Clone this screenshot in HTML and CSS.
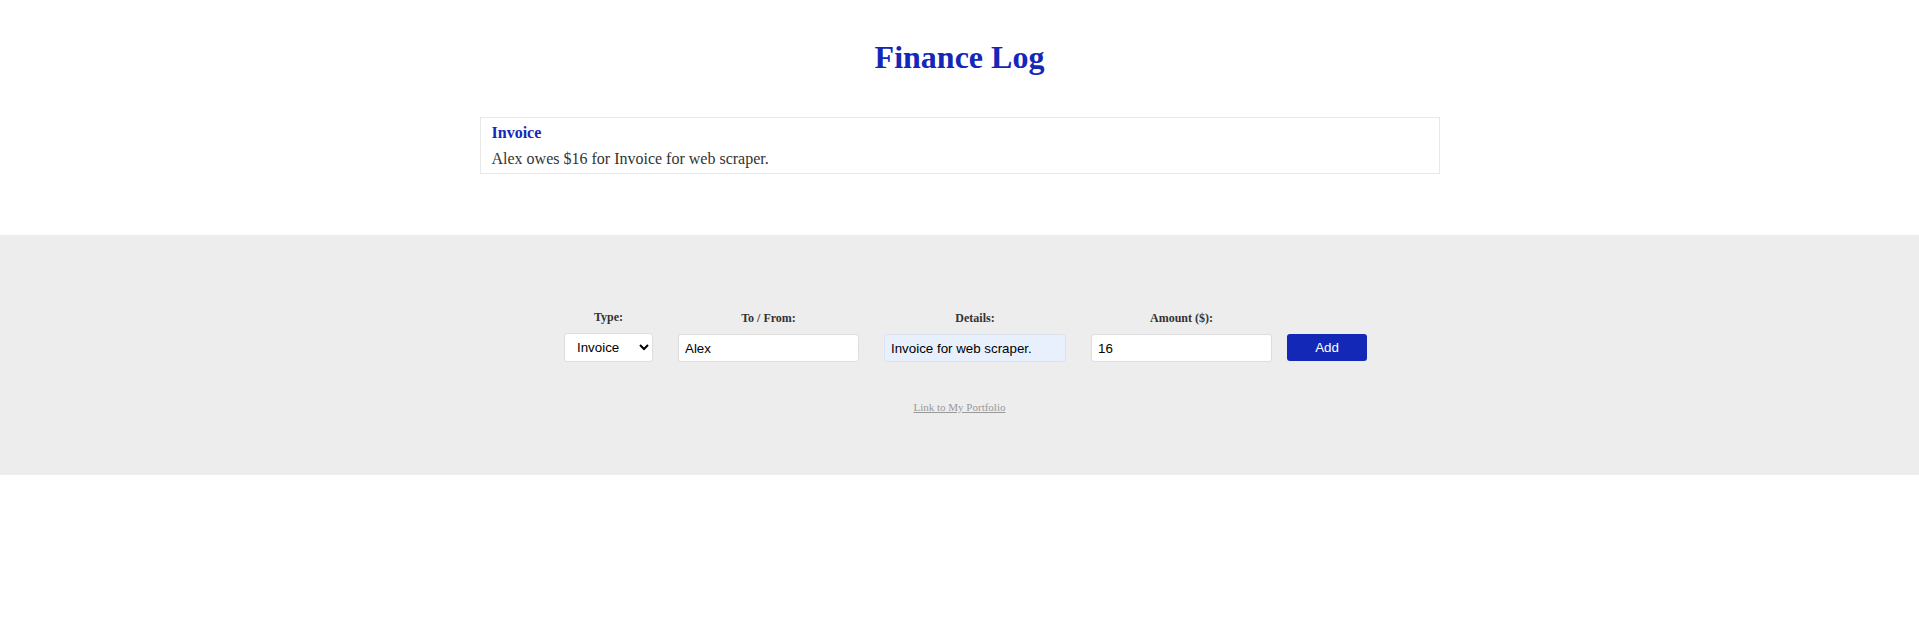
FILE: index.html
```html
<!DOCTYPE html>
<html>
<head>
<meta charset="utf-8">
<title>Finance Log</title>
<link rel="stylesheet" href="styles.css">
</head>
<body>
<header class="top">
  <h1 class="title">Finance Log</h1>
  <div class="card">
    <h3 class="card-title">Invoice</h3>
    <p class="card-text">Alex owes $16 for Invoice for web scraper.</p>
  </div>
</header>
<footer class="panel">
  <form class="row">
    <div class="field">
      <label class="label">Type:</label>
      <select class="select"><option>Invoice</option><option>Payment</option></select>
    </div>
    <div class="field">
      <label class="label">To / From:</label>
      <input class="input" type="text" value="Alex">
    </div>
    <div class="field">
      <label class="label">Details:</label>
      <input class="input autofill" type="text" value="Invoice for web scraper.">
    </div>
    <div class="field">
      <label class="label">Amount ($):</label>
      <input class="input" type="text" value="16">
    </div>
    <button class="btn" type="button">Add</button>
  </form>
  <a class="link" href="#">Link to My Portfolio</a>
</footer>
</body>
</html>
```
FILE: styles.css
```css
* { box-sizing: border-box; }
html, body { margin: 0; padding: 0; background: #fff; }
body { font-family: "Liberation Serif", "Times New Roman", serif; color: #333; }

.top {
  padding: 39px 0 61px;
  display: flex;
  flex-direction: column;
  align-items: center;
}
.title {
  margin: 0;
  font-size: 32px;
  line-height: 37px;
  font-weight: bold;
  color: #1428b8;
}
.card {
  margin-top: 41px;
  width: 960px;
  border: 1px solid #e8e8e8;
  padding: 6px 11px 5px;
  background: #fff;
}
.card-title {
  margin: 0;
  font-size: 16px;
  line-height: 18px;
  font-weight: bold;
  color: #1428b8;
}
.card-text {
  margin: 8px 0 0;
  font-size: 16px;
  line-height: 18px;
  color: #333;
}

.panel {
  background: #ededed;
  height: 240px;
  padding-top: 75px;
  display: flex;
  flex-direction: column;
  align-items: center;
}
.row {
  display: flex;
  align-items: flex-end;
  gap: 25px;
  padding-left: 12px;
  margin: 0;
}
.field {
  display: flex;
  flex-direction: column;
  align-items: center;
}
.label {
  font-size: 12px;
  line-height: 14px;
  font-weight: bold;
  color: #333;
  margin-bottom: 9px;
}
.select {
  width: 89px;
  height: 29px;
  border: 1px solid #ddd;
  border-radius: 3px;
  background: #fff;
  font-family: "Liberation Sans", Arial, sans-serif;
  font-size: 13.33px;
  color: #000;
  padding: 0 4px 0 8px;
}
.input {
  width: 181px;
  height: 28px;
  border: 1px solid #ddd;
  border-radius: 3px;
  background: #fff;
  font-family: "Liberation Sans", Arial, sans-serif;
  font-size: 13.33px;
  color: #000;
  padding: 0 6px;
  outline: none;
}
.input.autofill {
  width: 182px;
  background: #e8f0fe;
  border-color: #dde3ee;
}
.btn {
  margin-left: -10px;
  width: 80px;
  height: 27px;
  border: none;
  border-radius: 3px;
  background: #1428b8;
  color: #fff;
  font-family: "Liberation Sans", Arial, sans-serif;
  font-size: 13.33px;
  margin-bottom: 1px;
}
.link {
  margin-top: 39px;
  font-size: 11px;
  line-height: 13px;
  color: #999;
  text-decoration: underline;
}
```
